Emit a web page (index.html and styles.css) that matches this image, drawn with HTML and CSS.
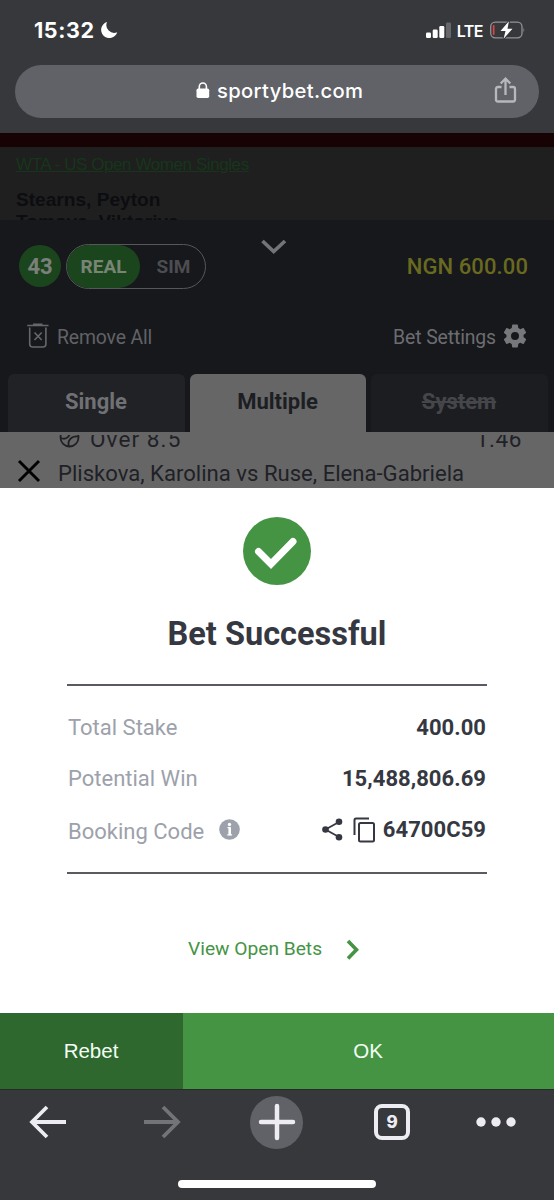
FILE: index.html
```html
<!DOCTYPE html>
<html lang="en">
<head>
<meta charset="utf-8">
<title>SportyBet</title>
<link rel="stylesheet" href="styles.css">
</head>
<body>
<main class="phone">
  <header class="browser-top">
    <div class="status">
      <span class="clock">15:32</span>
      <svg class="moon" width="18" height="18" viewBox="0 0 18 18"><path d="M7 1A8.200 8.200 0 1 0 17.200 11.200 7.800 7.800 0 0 1 7 1Z" fill="#fff"/></svg>
      <span class="grow"></span>
      <svg class="signal" width="26" height="17" viewBox="0 0 26 17"><g fill="#fff"><rect x="0" y="10.500" width="5" height="5.500" rx="1.300"/><rect x="6.700" y="7.500" width="5" height="8.500" rx="1.300"/><rect x="13.300" y="4" width="5" height="12" rx="1.300"/><rect x="20" y="0.500" width="5" height="15.500" rx="1.300" opacity=".24"/></g></svg>
      <span class="lte">LTE</span>
      <svg class="battery" width="36" height="18" viewBox="0 0 36 18"><rect x=".7" y="1.200" width="31.300" height="15.600" rx="4.500" fill="none" stroke="#929294" stroke-width="1.300"/><path d="M33.500 6.500q1.700 2.500 0 5z" fill="#929294"/><rect x="2.800" y="4" width="1.700" height="10" rx=".8" fill="#df453f"/><path d="M18.900 .3 10.500 10h5l-1.900 7.800L22.500 7.700h-5Z" fill="#fff" stroke="#37383c" stroke-width="2" paint-order="stroke"/></svg>
    </div>
    <div class="address">
      <svg class="lock" width="14" height="17" viewBox="0 0 14 17"><rect x=".5" y="6.500" width="12.700" height="9.500" rx="1.700" fill="#fff"/><path d="M3.300 7V4.500a3.550 3.550 0 0 1 7.100 0V7" fill="none" stroke="#fff" stroke-width="1.600"/></svg>
      <span class="domain">sportybet.com</span>
      <svg class="export" width="24" height="28" viewBox="0 0 24 28"><path d="M7.500 11H4q-2 0-2 2v10.500q0 2 2 2h15q2 0 2-2V13q0-2-2-2h-3.500M11.500 19V3.500M6.700 7.500l4.800-4.800 4.800 4.800" fill="none" stroke="#b6b8bb" stroke-width="2.300"/></svg>
    </div>
  </header>
  <div class="red-strip"></div>
  <section class="event">
    <div class="league">WTA - US Open Women Singles</div>
    <div class="player">Stearns, Peyton</div>
    <div class="player second">Tomova, Viktoriya</div>
  </section>
  <section class="slip">
    <div class="slip-head">
      <span class="count">43</span>
      <div class="mode"><span class="real">REAL</span><span class="sim">SIM</span></div>
      <svg class="collapse" width="28" height="18" viewBox="0 0 28 18"><path d="m2.500 3 11.200 10.500L25 3" fill="none" stroke="#737477" stroke-width="3.700"/></svg>
      <span class="balance">NGN 600.00</span>
    </div>
    <div class="slip-tools">
      <svg class="trash" width="24" height="28" viewBox="0 0 24 28"><g fill="none" stroke="#666769" stroke-width="1.600"><path d="M1.200 3.500h21.300M7 2.200h9.500M3.700 5.500V22q0 3 3 3h10.200q3 0 3-3V5.500"/><path d="m8.500 10.500 7.200 7.500m0-7.500L8.500 18"/></g></svg>
      <span class="remove">Remove All</span>
      <span class="grow"></span>
      <span class="settings">Bet Settings</span>
      <svg class="gear" width="24" height="24" viewBox="1.500 1.500 21 21"><path fill="#777879" d="M19.430 12.980c.04-.32.070-.64.070-.98s-.03-.66-.07-.98l2.110-1.650c.19-.15.240-.42.120-.64l-2-3.460c-.12-.22-.39-.3-.61-.22l-2.490 1c-.52-.4-1.080-.73-1.690-.98l-.38-2.650A.488.488 0 0 0 14 2h-4c-.25 0-.46.180-.49.420l-.38 2.650c-.61.250-1.170.59-1.690.98l-2.490-1c-.23-.09-.49 0-.61.220l-2 3.460c-.13.220-.07.490.120.640l2.110 1.650c-.04.320-.07.650-.07.980s.03.660.070.980l-2.110 1.650c-.19.150-.24.420-.12.640l2 3.460c.12.220.39.300.61.220l2.490-1c.52.400 1.080.730 1.690.980l.38 2.650c.03.240.24.420.49.420h4c.25 0 .46-.18.490-.42l.38-2.650c.61-.25 1.170-.59 1.690-.98l2.490 1c.23.090.49 0 .61-.22l2-3.460c.12-.22.070-.49-.12-.64l-2.110-1.650zM12 15.500a3.500 3.500 0 1 1 0-7 3.500 3.500 0 0 1 0 7z"/></svg>
    </div>
    <div class="tabs"><span class="tab">Single</span><span class="tab active">Multiple</span><span class="tab disabled">System</span></div>
  </section>
  <section class="selection">
    <div class="pick"><svg class="ball" width="21" height="21" viewBox="0 0 21 21"><g fill="none" stroke="#202126" stroke-width="1.800"><circle cx="10.500" cy="10.500" r="9"/><path d="M1.700 11c6 2.500 10-2 9-8M10 19.500c-2-6 2-10.500 9-10"/></g></svg><span class="over">Over 8.5</span><span class="grow"></span><span class="odds">1.46</span></div>
    <div class="match"><svg class="cross" width="24" height="24" viewBox="0 0 24 24"><path d="m2 2 20 20m0-20L2 22" stroke="#020202" stroke-width="3"/></svg><span class="teams">Pliskova, Karolina vs Ruse, Elena-Gabriela</span></div>
  </section>
  <section class="result">
    <svg class="success" width="68" height="68" viewBox="0 0 68 68"><circle cx="34" cy="34" r="34" fill="#449444"/><path d="m15.500 34.500 12.500 12.500L50 24.500" fill="none" stroke="#fff" stroke-width="7" stroke-linecap="round"/></svg>
    <h1 class="title">Bet Successful</h1>
    <div class="summary">
      <div class="line"><span class="label">Total Stake</span><strong class="value">400.00</strong></div>
      <div class="line"><span class="label">Potential Win</span><strong class="value">15,488,806.69</strong></div>
      <div class="line booking"><span class="label">Booking Code</span>
        <svg class="info" width="21" height="21" viewBox="0 0 21 21"><circle cx="10.500" cy="10.500" r="10.300" fill="#9ca1ab"/><circle cx="10.500" cy="5.500" r="1.700" fill="#fff"/><path d="M8.500 8.700h3M8.300 15.800h4.800" fill="none" stroke="#fff" stroke-width="1.200"/><path d="M10.700 8.200v8" stroke="#fff" stroke-width="2.600"/></svg>
        <span class="grow"></span>
        <svg class="share" width="21" height="23" viewBox="0 0 21 23"><path d="M17 4 3.500 11.500 17 19" fill="none" stroke="#353841" stroke-width="1.800"/><g fill="#353841"><circle cx="17" cy="3.800" r="3.300"/><circle cx="3.500" cy="11.500" r="3.300"/><circle cx="17" cy="19.200" r="3.300"/></g></svg>
        <svg class="copy" width="22" height="26" viewBox="0 0 22 26"><g fill="none" stroke="#353841" stroke-width="2"><path d="M1.500 18V3q0-1.500 1.500-1.500h13"/><rect x="6" y="6" width="15" height="18.500" rx="1.500"/></g></svg>
        <strong class="value">64700C59</strong>
      </div>
    </div>
    <div class="open-bets"><span class="view">View Open Bets</span><svg class="next" width="14" height="22" viewBox="0 0 14 22"><path d="m2 2 8.500 8.800L2 19.600" fill="none" stroke="#449444" stroke-width="3.600"/></svg></div>
  </section>
  <div class="actions"><div class="rebet"><span>Rebet</span></div><div class="ok"><span>OK</span></div></div>
  <footer class="toolbar">
    <div class="nav">
      <svg class="back" width="38" height="36" viewBox="0 0 38 36"><path d="M37 18H3M18 3 3 18l15 15" fill="none" stroke="#ececf2" stroke-width="3.800"/></svg>
      <svg class="forward" width="38" height="36" viewBox="0 0 38 36"><path d="M1 18h34M20 3l15 15-15 15" fill="none" stroke="#737477" stroke-width="3.800"/></svg>
      <span class="add"><svg width="38" height="38" viewBox="0 0 38 38"><path d="M19 3v32M3 19h32" stroke="#ececf2" stroke-width="4.500" stroke-linecap="round"/></svg></span>
      <span class="tab-count">9</span>
      <svg class="more" width="40" height="10" viewBox="0 0 40 10"><g fill="#ececf2"><circle cx="5" cy="5" r="4.700"/><circle cx="20" cy="5" r="4.700"/><circle cx="35" cy="5" r="4.700"/></g></svg>
    </div>
    <div class="home"></div>
  </footer>
</main>
</body>
</html>
```
FILE: styles.css
```css
* { box-sizing: border-box; }
body { margin: 0; font-family: Roboto, sans-serif; background: #37383c; }
svg { display: block; flex: none; }
span, strong { white-space: nowrap; }
.phone { width: 554px; height: 1200px; overflow: hidden; }
.grow { flex: 1; }

.browser-top { height: 133px; background: #37383c; font-family: Inter, sans-serif; color: #fff; }
.status { height: 65px; display: flex; align-items: center; padding: 0 28px 5px 34px; }
.clock { font-size: 21.5px; font-weight: 700; letter-spacing: .6px; }
.moon { margin-left: 5px; }
.lte { margin: 1px 7px 0 5px; font-size: 16px; font-weight: 600; letter-spacing: -.5px; }
.address { height: 53px; margin: 0 15px; border-radius: 27px; background: #606267; display: flex; align-items: center; padding: 0 21px 2px 181px; }
.domain { margin-left: 7px; font-size: 20.2px; font-weight: 500; letter-spacing: .35px; }
.export { margin: 0 0 2px auto; }

.red-strip { height: 14px; background: #180304; }
.event { height: 73px; overflow: hidden; background: #1f1f1f; padding: 7px 16px 0; font-family: "Liberation Sans", sans-serif; line-height: 22px; }
.league { font-size: 17px; letter-spacing: -.42px; color: #16361b; text-decoration: underline; }
.player { margin-top: 13px; font-size: 19.1px; font-weight: 700; color: #0c0d11; }
.player.second { margin-top: 0; }

.slip { height: 212px; background: #17181c; }
.slip-head { height: 92px; display: flex; align-items: center; padding: 0 26px 0 19px; }
.count { width: 42px; height: 42px; border-radius: 50%; background: #1b461d; color: #7c7f7c; display: flex; align-items: center; justify-content: center; font-size: 22px; font-weight: 700; }
.mode { width: 140px; height: 45px; margin-left: 5px; border: 1px solid #56575b; border-radius: 23px; display: flex; font-size: 19px; font-weight: 700; color: #4c4d51; }
.real { width: 73px; border-radius: 22px; background: #1b461d; color: #788575; display: flex; align-items: center; justify-content: center; }
.sim { flex: 1; display: flex; align-items: center; justify-content: center; padding-left: 2px; }
.collapse { margin: 0 0 38px 54px; }
.balance { margin-left: auto; font-size: 22px; font-weight: 500; letter-spacing: .1px; color: #696a20; }
.slip-tools { height: 62px; display: flex; align-items: center; padding: 0 27px 12px 26px; font-size: 19.4px; color: #616266; }
.trash { margin-bottom: 2px; }
.remove { margin-left: 7px; letter-spacing: -.15px; }
.settings { margin-right: 7px; color: #6c6d70; letter-spacing: -.12px; }
.gear { margin-bottom: 2px; }
.tabs { height: 58px; display: grid; grid-template-columns: 177px 176px 177px; gap: 5px; padding: 0 8px; }
.tab { border-radius: 6px 6px 0 0; background: #212226; color: #707174; font-size: 22px; font-weight: 700; display: flex; align-items: center; justify-content: center; padding: 0 1px 4px 0; }
.tab.active { background: #666; color: #1d1e23; }
.tab.disabled { background: #1c1d21; color: #45464a; text-decoration: line-through; }

.selection { height: 56px; padding-top: 3px; background: #666; color: #202126; }
.pick { height: 23px; margin-left: 59px; margin-right: 32px; display: flex; align-items: flex-end; overflow: hidden; font-size: 22.5px; line-height: 26px; }
.ball { margin-bottom: 10px; }
.over { margin: 0 0 6px 10px; letter-spacing: 1.1px; }
.odds { margin-bottom: 6px; letter-spacing: .6px; }
.match { height: 30px; padding-left: 17px; display: flex; align-items: center; }
.cross { margin-bottom: 4px; }
.teams { margin: 0 0 0 17px; font-size: 22.1px; }

.result { height: 525px; padding: 29px 67px 0; background: #fff; color: #353841; display: flex; flex-direction: column; align-items: center; }
.title { margin: 30px 0 0; font-size: 32.5px; line-height: 38px; font-weight: 700; }
.summary { width: 420px; height: 190px; margin-top: 31px; border: solid #5a5b62; border-width: 2px 0; padding-top: 16px; }
.line { height: 51px; display: flex; align-items: center; padding: 0 1px; }
.label { font-size: 22px; color: #9ca1ab; }
.value { margin-left: auto; font-size: 22px; font-weight: 700; letter-spacing: .05px; }
.booking .label { padding-top: 4px; }
.info { margin-left: 15px; }
.share { margin-right: 10px; }
.booking .value { margin-left: 8px; }
.open-bets { align-self: flex-start; margin: 63px 0 0 121px; display: flex; align-items: center; gap: 24px; color: #449444; font-size: 19.2px; }
.view { padding-bottom: 3px; }

.actions { height: 76px; display: grid; grid-template-columns: 183px 1fr; font-family: "Liberation Sans", sans-serif; font-size: 20.5px; color: #f3fff3; }
.rebet, .ok { display: flex; align-items: center; justify-content: center; padding: 0 1px 0 0; }
.rebet { background: #2e682f; }
.ok { background: #449444; }
.toolbar { height: 111px; background: #37383c; border-top: 1px solid #222e25; }
.nav { height: 64px; display: flex; align-items: center; padding-left: 29px; }
.forward { margin-left: 76px; }
.add { width: 53px; height: 53px; margin-left: 69px; border-radius: 50%; background: #606267; display: flex; align-items: center; justify-content: center; }
.tab-count { width: 36px; height: 36px; margin-left: 71px; border: 4px solid #ececf2; border-radius: 8px; color: #ececf2; font: 800 17px Inter, sans-serif; display: flex; align-items: center; justify-content: center; }
.more { margin-left: 66px; }
.home { width: 198px; height: 8px; margin: 26px 0 0 178px; border-radius: 4px; background: #fff; }
```
